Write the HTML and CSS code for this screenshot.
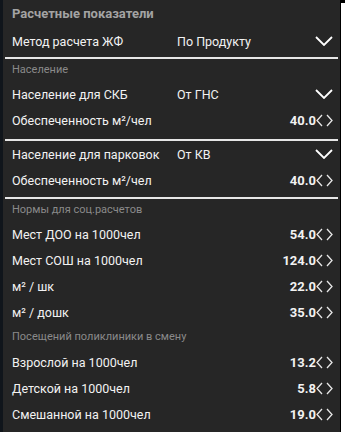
FILE: index.html
```html
<!DOCTYPE html>
<html lang="ru">
<head>
    <meta charset="UTF-8">
    <meta name="viewport" content="width=device-width, initial-scale=1.0">
    <title>Расчетные показатели</title>
    <link rel="stylesheet" href="styles.css">
</head>
<body>
    <div class="edge"></div>
    <div class="panel">
        <div class="title">Расчетные показатели</div>
        <div class="row">
            <span class="label">Метод расчета ЖФ</span>
            <span class="choice">По Продукту</span>
            <svg class="drop" width="18" height="10" viewBox="0 0 18 10"><polyline points="1,1 9,9 17,1"/></svg>
        </div>
        <div class="divider"></div>

        <div class="header">Население</div>
        <div class="row">
            <span class="label">Население для СКБ</span>
            <span class="choice">От ГНС</span>
            <svg class="drop" width="18" height="10" viewBox="0 0 18 10"><polyline points="1,1 9,9 17,1"/></svg>
        </div>
        <div class="row">
            <span class="label">Обеспеченность м²/чел</span>
            <span class="value">40.0</span>
            <svg class="step" width="17" height="13" viewBox="0 0 17 13"><polyline points="6,1 1,6.5 6,12"/><polyline points="11,1 16,6.5 11,12"/></svg>
        </div>
        <div class="divider d2"></div>

        <div class="row">
            <span class="label">Население для парковок</span>
            <span class="choice">От КВ</span>
            <svg class="drop" width="18" height="10" viewBox="0 0 18 10"><polyline points="1,1 9,9 17,1"/></svg>
        </div>
        <div class="row">
            <span class="label">Обеспеченность м²/чел</span>
            <span class="value">40.0</span>
            <svg class="step" width="17" height="13" viewBox="0 0 17 13"><polyline points="6,1 1,6.5 6,12"/><polyline points="11,1 16,6.5 11,12"/></svg>
        </div>
        <div class="divider d3"></div>

        <div class="header">Нормы для соц.расчетов</div>
        <div class="row">
            <span class="label">Мест ДОО на 1000чел</span>
            <span class="value">54.0</span>
            <svg class="step" width="17" height="13" viewBox="0 0 17 13"><polyline points="6,1 1,6.5 6,12"/><polyline points="11,1 16,6.5 11,12"/></svg>
        </div>
        <div class="row">
            <span class="label">Мест СОШ на 1000чел</span>
            <span class="value">124.0</span>
            <svg class="step" width="17" height="13" viewBox="0 0 17 13"><polyline points="6,1 1,6.5 6,12"/><polyline points="11,1 16,6.5 11,12"/></svg>
        </div>
        <div class="row">
            <span class="label">м² / шк</span>
            <span class="value">22.0</span>
            <svg class="step" width="17" height="13" viewBox="0 0 17 13"><polyline points="6,1 1,6.5 6,12"/><polyline points="11,1 16,6.5 11,12"/></svg>
        </div>
        <div class="row">
            <span class="label">м² / дошк</span>
            <span class="value">35.0</span>
            <svg class="step" width="17" height="13" viewBox="0 0 17 13"><polyline points="6,1 1,6.5 6,12"/><polyline points="11,1 16,6.5 11,12"/></svg>
        </div>

        <div class="header h2">Посещений поликлиники в смену</div>
        <div class="row">
            <span class="label">Взрослой на 1000чел</span>
            <span class="value">13.2</span>
            <svg class="step" width="17" height="13" viewBox="0 0 17 13"><polyline points="6,1 1,6.5 6,12"/><polyline points="11,1 16,6.5 11,12"/></svg>
        </div>
        <div class="row">
            <span class="label">Детской на 1000чел</span>
            <span class="value">5.8</span>
            <svg class="step" width="17" height="13" viewBox="0 0 17 13"><polyline points="6,1 1,6.5 6,12"/><polyline points="11,1 16,6.5 11,12"/></svg>
        </div>
        <div class="row">
            <span class="label">Смешанной на 1000чел</span>
            <span class="value">19.0</span>
            <svg class="step" width="17" height="13" viewBox="0 0 17 13"><polyline points="6,1 1,6.5 6,12"/><polyline points="11,1 16,6.5 11,12"/></svg>
        </div>
    </div>
    <div class="gap"></div>
    <div class="frame"></div>
</body>
</html>
```

FILE: styles.css
```css
html, body {
    margin: 0;
    padding: 0;
    width: 345px;
    height: 432px;
    overflow: hidden;
}

body {
    display: flex;
    background: #000;
    font-family: Roboto, 'Noto Sans', sans-serif;
    color: #f2f2f2;
}

.edge {
    width: 3px;
    background: #10151b;
}

.panel {
    width: 337px;
    height: 432px;
    background: #262626;
}

.gap {
    width: 1px;
}

.frame {
    width: 4px;
    margin-top: 3px;
    background: #fff;
}

.title {
    height: 28px;
    line-height: 28px;
    padding-left: 9px;
    font-size: 13px;
    font-weight: bold;
    color: #a3a3a3;
}

.header {
    height: 22px;
    line-height: 22px;
    padding-left: 9px;
    font-size: 11px;
    color: #8a8a8a;
}

.header.h2 {
    height: 24px;
    line-height: 24px;
}

.row {
    height: 26px;
    display: flex;
    align-items: center;
    padding: 0 7px 0 9px;
    font-size: 12.5px;
}

.label {
    width: 165px;
    flex-shrink: 0;
    white-space: nowrap;
}

.choice {
    flex: 1;
}

.value {
    flex: 1;
    text-align: right;
    font-weight: bold;
    font-size: 13px;
}

.drop polyline {
    fill: none;
    stroke: #fff;
    stroke-width: 1.8;
}

.step polyline {
    fill: none;
    stroke: #e8e8e8;
    stroke-width: 1.3;
}

.divider {
    height: 2px;
    margin: 3px 2px 0 2px;
    background: #e6e6e6;
}

.divider.d2 {
    margin-top: 6px;
}

.divider.d3 {
    margin-top: 4px;
}
```
